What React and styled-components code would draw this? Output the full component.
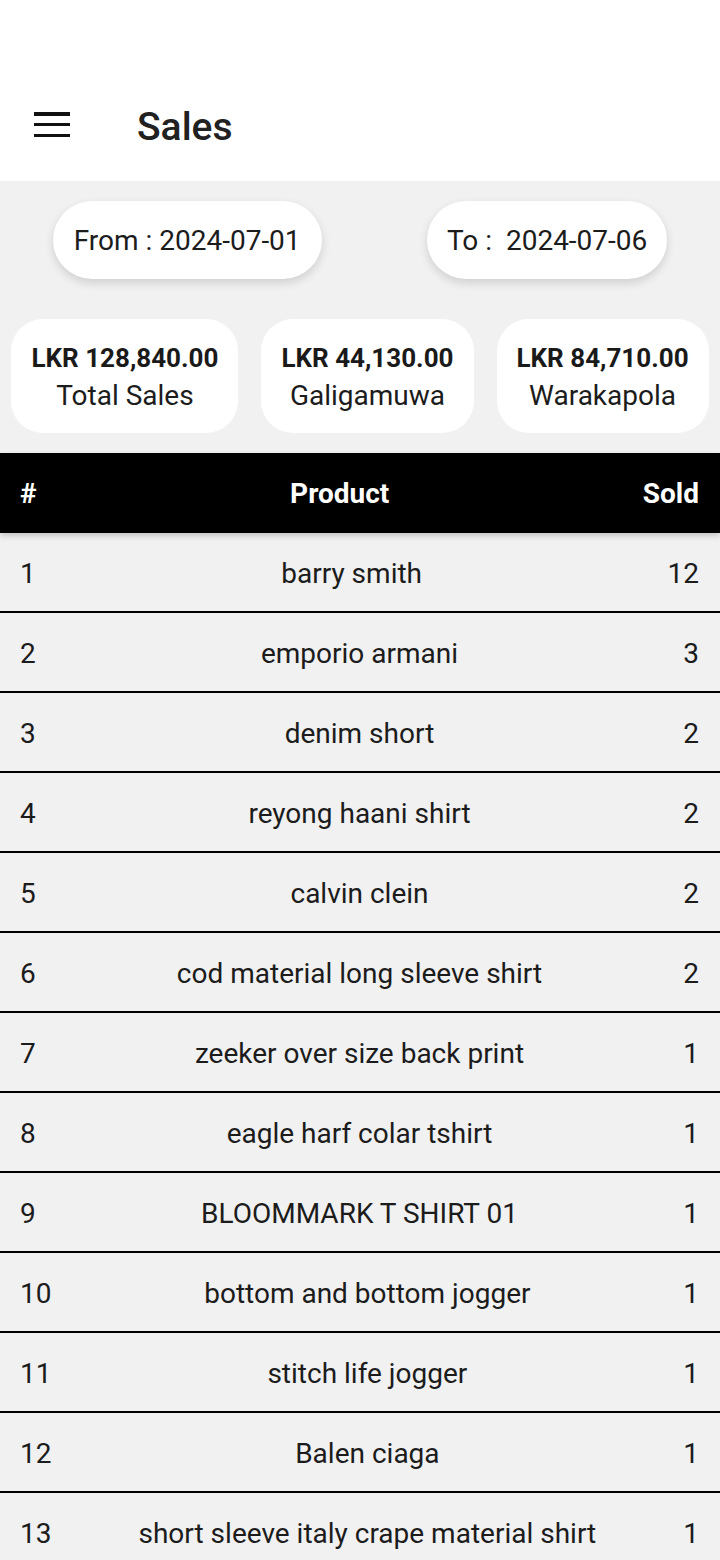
import React from "react";
import styled, { createGlobalStyle } from "styled-components";

const Global = createGlobalStyle`
  html, body { margin: 0; padding: 0; background: #f1f1f1; }
  body { font-family: Roboto, "Noto Sans", sans-serif; color: #212121; }
  * { box-sizing: border-box; }
`;

const Page = styled.div`
  width: 720px;
  min-height: 1560px;
  background: #f1f1f1;
`;

const AppBar = styled.header`
  height: 181px;
  background: #ffffff;
  display: flex;
  align-items: flex-end;
  padding: 0 0 31px 34px;
`;

const MenuButton = styled.div`
  width: 36px;
  height: 25px;
  display: flex;
  flex-direction: column;
  justify-content: space-between;
  margin-bottom: 13px;
`;

const MenuLine = styled.span`
  display: block;
  height: 3.5px;
  background: #111;
`;

const Title = styled.h1`
  margin: 0 0 0 67px;
  font-size: 39px;
  font-weight: 500;
  line-height: 46px;
  color: #212121;
  letter-spacing: 0;
`;

const DateRow = styled.div`
  display: flex;
  justify-content: space-around;
  padding: 20px 0 0;
`;

const DatePill = styled.div`
  height: 78px;
  padding: 1px ${(p) => p.$px}px 0;
  border-radius: 39px;
  background: #fff;
  display: flex;
  align-items: center;
  font-size: 28px;
  color: #1c1c1c;
  white-space: pre;
  box-shadow: 0 4px 10px rgba(0, 0, 0, 0.14);
`;

const CardRow = styled.div`
  display: flex;
  justify-content: center;
  gap: 23px;
  padding: 40px 11px 0;
`;

const Card = styled.div`
  background: #fff;
  border-radius: 32px;
  height: 114px;
  padding: 2px 20px 0;
  display: flex;
  flex-direction: column;
  align-items: center;
  justify-content: center;
`;

const Amount = styled.div`
  font-size: 26px;
  font-weight: 700;
  line-height: 37px;
  color: #1a1a1a;
  white-space: nowrap;
`;

const Label = styled.div`
  font-size: 28px;
  line-height: 38px;
  color: #1c1c1c;
  white-space: nowrap;
`;

const Table = styled.div`
  margin-top: 20px;
`;

const HeadRow = styled.div`
  height: 80px;
  background: #000;
  color: #fff;
  display: flex;
  align-items: center;
  padding: 0 21px 0 20px;
  font-size: 28px;
  font-weight: 700;
  box-shadow: 0 3px 6px rgba(0, 0, 0, 0.18);
  position: relative;
`;

const Row = styled.div`
  height: 80px;
  display: flex;
  align-items: center;
  padding: 2px 21px 0 20px;
  border-bottom: 2px solid #000;
  font-size: 28px;
  color: #1c1c1c;
`;

const Num = styled.div`
  flex: none;
`;

const Product = styled.div`
  flex: 1;
  text-align: center;
  white-space: nowrap;
`;

const Sold = styled.div`
  flex: none;
  text-align: right;
`;

const rows = [
  ["barry smith", 12],
  ["emporio armani", 3],
  ["denim short", 2],
  ["reyong haani shirt", 2],
  ["calvin clein", 2],
  ["cod material long sleeve shirt", 2],
  ["zeeker over size back print", 1],
  ["eagle harf colar tshirt", 1],
  ["BLOOMMARK T SHIRT 01", 1],
  ["bottom and bottom jogger", 1],
  ["stitch life jogger", 1],
  ["Balen ciaga", 1],
  ["short sleeve italy crape material shirt", 1],
];

const cards = [
  ["LKR 128,840.00", "Total Sales"],
  ["LKR 44,130.00", "Galigamuwa"],
  ["LKR 84,710.00", "Warakapola"],
];

export default function App() {
  return (
    <Page>
      <Global />
      <AppBar>
        <MenuButton>
          <MenuLine />
          <MenuLine />
          <MenuLine />
        </MenuButton>
        <Title>Sales</Title>
      </AppBar>
      <DateRow>
        <DatePill $px={21}>From : 2024-07-01</DatePill>
        <DatePill $px={20}>{"To :  2024-07-06"}</DatePill>
      </DateRow>
      <CardRow>
        {cards.map(([a, l]) => (
          <Card key={l}>
            <Amount>{a}</Amount>
            <Label>{l}</Label>
          </Card>
        ))}
      </CardRow>
      <Table>
        <HeadRow>
          <Num>#</Num>
          <Product>Product</Product>
          <Sold>Sold</Sold>
        </HeadRow>
        {rows.map(([name, sold], i) => (
          <Row key={i}>
            <Num>{i + 1}</Num>
            <Product>{name}</Product>
            <Sold>{sold}</Sold>
          </Row>
        ))}
      </Table>
    </Page>
  );
}
